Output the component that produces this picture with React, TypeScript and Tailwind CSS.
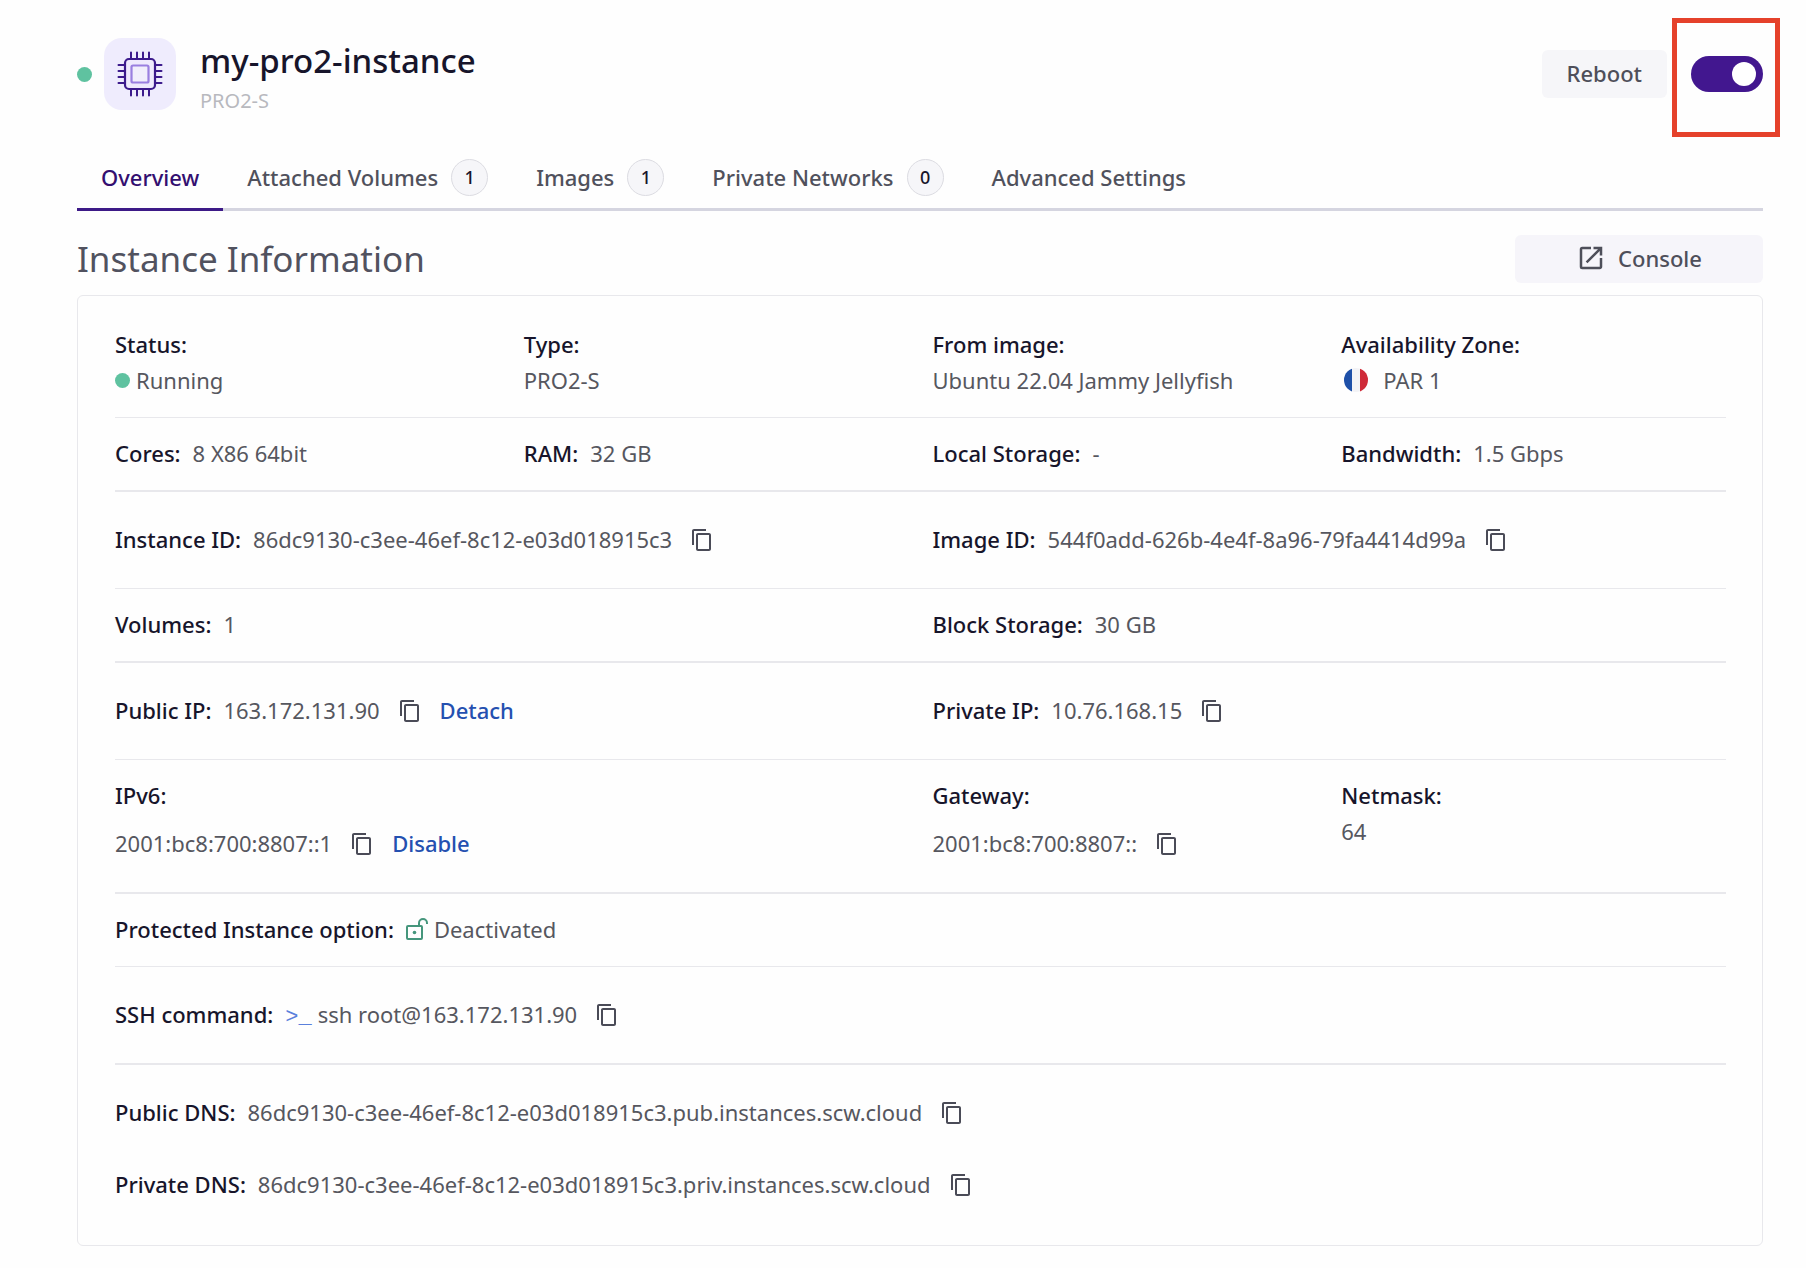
import { useState, type ReactNode } from "react";
import { MdContentCopy, MdOpenInNew } from "react-icons/md";

function InstanceIcon() {
  const pins = [14, 20, 26, 32];
  return (
    <svg viewBox="0 0 46 46" className="size-[46px]" fill="none" stroke="#3c1a8c" strokeWidth="2" strokeLinecap="round" aria-hidden="true">
      {pins.map((p) => (
        <path key={p} d={`M${p} 1.5V8M${p} 38v6.500M1.500 ${p}H8M38 ${p}h6.500`} />
      ))}
      <rect x="8" y="8" width="30" height="30" rx="4" fill="#efeafd" strokeWidth="2.200" />
      <rect x="14.500" y="14.500" width="17" height="17" rx="1.500" fill="#f1eefc" stroke="#9a7fe0" strokeWidth="2.200" />
    </svg>
  );
}

function UnlockIcon() {
  return (
    <svg viewBox="0 0 22 22" className="size-[22px]" fill="none" stroke="#45967c" strokeWidth="2" aria-hidden="true">
      <rect x="1" y="8" width="15" height="13" rx="1" />
      <path d="M13 8V5a4 4 0 0 1 8 0v1" />
      <circle cx="8.500" cy="14.500" r="1.800" fill="#45967c" stroke="none" />
    </svg>
  );
}

function FrenchFlag() {
  return (
    <svg viewBox="0 0 24 24" className="size-6" aria-hidden="true">
      <clipPath id="flag-circle">
        <circle cx="12" cy="12" r="12" />
      </clipPath>
      <g clipPath="url(#flag-circle)">
        <path fill="#1e50a8" d="M0 0h8v24H0z" />
        <path fill="#f3f3f6" d="M8 0h8v24H8z" />
        <path fill="#cf2a38" d="M16 0h8v24h-8z" />
      </g>
    </svg>
  );
}

function StatusDot() {
  return <span className="size-[15px] shrink-0 rounded-full bg-[#5fc2a0]" />;
}

function CopyButton({ label }: { label: string }) {
  return (
    <button type="button" aria-label={`Copy ${label}`} className="ml-[6px] pt-[2px] text-[#4a4b57]">
      <MdContentCopy className="size-6" />
    </button>
  );
}

type FieldProps = {
  label: string;
  children: ReactNode;
  stacked?: boolean;
  copy?: boolean;
  action?: string;
  span?: string;
};

function Field({ label, children, stacked, copy, action, span = "" }: FieldProps) {
  const height = copy ? "min-h-[60px]" : "min-h-9";
  return (
    <div className={`flex ${stacked ? "flex-col" : `items-center gap-3 ${height}`} ${span}`}>
      <dt className="leading-9 font-medium whitespace-nowrap text-[#17152b]">{label}:</dt>
      <dd className={`flex items-center gap-3 leading-9 whitespace-nowrap text-[#56575f] ${stacked ? height : ""}`}>
        {children}
        {copy && <CopyButton label={label} />}
        {action && (
          <button type="button" className="ml-[6px] font-medium text-[#2450b0]">
            {action}
          </button>
        )}
      </dd>
    </div>
  );
}

function Row({ children, line = "border-b" }: { children: ReactNode; line?: string }) {
  return <dl className={`grid grid-cols-4 gap-x-6 border-[#e8e8ec] pt-[17px] pb-[19px] ${line}`}>{children}</dl>;
}

const tabs = [
  { name: "Overview" },
  { name: "Attached Volumes", count: 1 },
  { name: "Images", count: 1 },
  { name: "Private Networks", count: 0 },
  { name: "Advanced Settings" },
];

export default function App() {
  const [active, setActive] = useState("Overview");
  const [on, setOn] = useState(true);

  return (
    <main className="min-h-screen bg-[#fefefe] pt-[38px] pr-[43px] pb-[22px] pl-[77px] font-['Noto_Sans',sans-serif] text-[22px]">
      <header className="flex h-[72px] items-center justify-between">
        <div className="flex items-center">
          <StatusDot />
          <div className="ml-3 flex size-[72px] items-center justify-center rounded-[18px] bg-[#efecfd]">
            <InstanceIcon />
          </div>
          <div className="ml-6 pt-[6px]">
            <h1 className="text-[33px] leading-[48px] font-medium text-[#17152b]">my-pro2-instance</h1>
            <p className="text-[20px] leading-8 text-[#b8b9be]">PRO2-S</p>
          </div>
        </div>
        <div className="flex items-center gap-6">
          <button type="button" className="h-12 rounded-md bg-[#f6f6f9] px-[25px] pb-[2px] font-medium text-[#4e4f5a]">
            Reboot
          </button>
          <label className="relative flex">
            <input
              type="checkbox"
              role="switch"
              aria-label="Instance power"
              checked={on}
              onChange={(e) => setOn(e.target.checked)}
              className="peer h-9 w-[72px] appearance-none rounded-full bg-gray-300 checked:bg-[#42178f]"
            />
            <span className="absolute top-[6px] left-[7px] size-6 rounded-full bg-white peer-checked:left-[41px]" />
            <span className="pointer-events-none absolute -top-[38px] -right-[17px] h-[119px] w-[108px] border-5 border-[#e5412b]" />
          </label>
        </div>
      </header>

      <nav role="tablist" className="mt-[35px] flex h-[66px] border-b-3 border-[#d5d5e0]">
        {tabs.map(({ name, count }) => (
          <button
            key={name}
            type="button"
            role="tab"
            aria-selected={active === name}
            onClick={() => setActive(name)}
            className={`-mb-[3px] flex items-center gap-[13px] border-b-3 px-6 pt-[2px] font-medium whitespace-nowrap ${
              active === name ? "border-[#3d1a87] text-[#330f70]" : "border-transparent text-[#50515c]"
            }`}
          >
            {name}
            {count !== undefined && (
              <span className="flex size-[37px] items-center justify-center rounded-full border border-[#dcdce2] bg-[#f6f6f9] text-[18px] text-[#17152b]">
                {count}
              </span>
            )}
          </button>
        ))}
      </nav>

      <div className="mt-6 flex h-12 items-center justify-between">
        <h2 className="text-[35px] leading-[48px] text-[#51525f]">Instance Information</h2>
        <button
          type="button"
          className="flex h-12 w-[248px] items-center justify-center gap-3 rounded-md bg-[#f6f5fa] pb-[2px] font-medium text-[#4e4f5a]"
        >
          <MdOpenInNew className="size-[30px]" />
          Console
        </button>
      </div>

      <section className="mt-3 rounded-md border border-[#e8e8ec] pt-[13px] pr-9 pb-3 pl-[37px]">
        <Row>
          <Field label="Status" stacked>
            <span className="flex items-center gap-[6px]">
              <StatusDot />
              Running
            </span>
          </Field>
          <Field label="Type" stacked>PRO2-S</Field>
          <Field label="From image" stacked>Ubuntu 22.04 Jammy Jellyfish</Field>
          <Field label="Availability Zone" stacked>
            <span className="ml-[3px] flex items-center gap-[15px]">
              <FrenchFlag />
              PAR 1
            </span>
          </Field>
        </Row>
        <Row line="border-b-2">
          <Field label="Cores">8 X86 64bit</Field>
          <Field label="RAM">32 GB</Field>
          <Field label="Local Storage">-</Field>
          <Field label="Bandwidth">1.5 Gbps</Field>
        </Row>
        <Row>
          <Field label="Instance ID" span="col-span-2" copy>86dc9130-c3ee-46ef-8c12-e03d018915c3</Field>
          <Field label="Image ID" span="col-span-2" copy>544f0add-626b-4e4f-8a96-79fa4414d99a</Field>
        </Row>
        <Row line="border-b-2">
          <Field label="Volumes" span="col-span-2">1</Field>
          <Field label="Block Storage" span="col-span-2">30 GB</Field>
        </Row>
        <Row>
          <Field label="Public IP" span="col-span-2" copy action="Detach">163.172.131.90</Field>
          <Field label="Private IP" span="col-span-2" copy>10.76.168.15</Field>
        </Row>
        <Row line="border-b-2">
          <Field label="IPv6" span="col-span-2" stacked copy action="Disable">2001:bc8:700:8807::1</Field>
          <Field label="Gateway" stacked copy>2001:bc8:700:8807::</Field>
          <Field label="Netmask" stacked>64</Field>
        </Row>
        <Row>
          <Field label="Protected Instance option" span="col-span-4">
            <span className="flex items-center gap-[6px]">
              <UnlockIcon />
              Deactivated
            </span>
          </Field>
        </Row>
        <Row line="border-b-2">
          <Field label="SSH command" span="col-span-4" copy>
            <span className="flex items-baseline gap-[6px]">
              <span className="font-['Liberation_Mono',monospace] leading-6 text-[#5a80dc]">&gt;_</span>
              <span>ssh root@163.172.131.90</span>
            </span>
          </Field>
        </Row>
        <Row line="gap-y-3">
          <Field label="Public DNS" span="col-span-4" copy>86dc9130-c3ee-46ef-8c12-e03d018915c3.pub.instances.scw.cloud</Field>
          <Field label="Private DNS" span="col-span-4" copy>86dc9130-c3ee-46ef-8c12-e03d018915c3.priv.instances.scw.cloud</Field>
        </Row>
      </section>
    </main>
  );
}
